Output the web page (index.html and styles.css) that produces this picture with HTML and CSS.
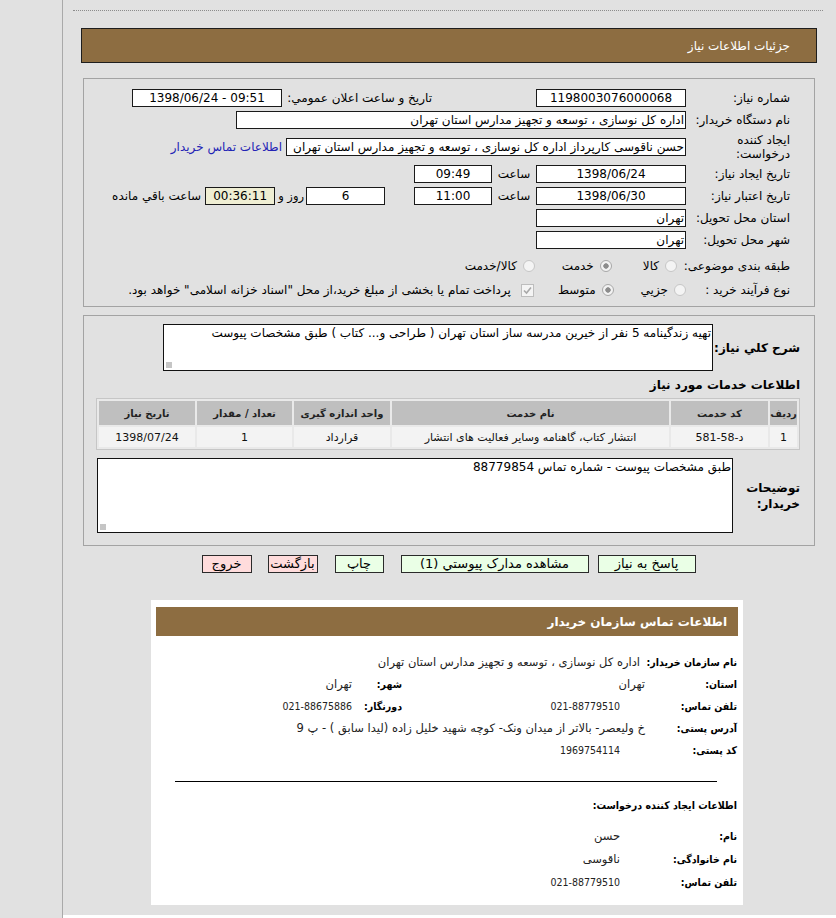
FILE: index.html
```html
<!DOCTYPE html>
<html lang="fa" dir="rtl">
<head>
<meta charset="utf-8">
<title>جزئیات اطلاعات نیاز</title>
<link rel="stylesheet" href="styles.css">
</head>
<body>
<div class="main">
  <div class="dots"></div>
  <div class="titlebar">جزئیات اطلاعات نیاز</div>

  <div class="panel form">
    <div class="frow">
      <span class="lbl">شماره نیاز:</span>
      <span class="box w150 c">1198003076000068</span>
      <span class="lbl2">تاریخ و ساعت اعلان عمومي:</span>
      <span class="box w150 c ltr">1398/06/24 - 09:51</span>
    </div>
    <div class="frow">
      <span class="lbl">نام دستگاه خریدار:</span>
      <span class="box w450">اداره کل نوسازی ، توسعه و تجهیز مدارس استان تهران</span>
    </div>
    <div class="frow tall">
      <span class="lbl wrap">ایجاد کننده درخواست:</span>
      <span class="box w400">حسن ناقوسی کارپرداز اداره کل نوسازی ، توسعه و تجهیز مدارس استان تهران</span>
      <a class="link" href="#">اطلاعات تماس خریدار</a>
    </div>
    <div class="frow">
      <span class="lbl">تاریخ ایجاد نیاز:</span>
      <span class="box w150 c">1398/06/24</span>
      <span class="hour">ساعت</span>
      <span class="box w78 c">09:49</span>
    </div>
    <div class="frow">
      <span class="lbl">تاریخ اعتبار نیاز:</span>
      <span class="box w150 c">1398/06/30</span>
      <span class="hour">ساعت</span>
      <span class="box w78 c">11:00</span>
      <span class="box w79 c days">6</span>
      <span class="and">روز و</span>
      <span class="box w70 c remain">00:36:11</span>
      <span class="left">ساعت باقي مانده</span>
    </div>
    <div class="frow">
      <span class="lbl">استان محل تحویل:</span>
      <span class="box w150">تهران</span>
    </div>
    <div class="frow">
      <span class="lbl">شهر محل تحویل:</span>
      <span class="box w150">تهران</span>
    </div>
    <div class="frow r8">
      <span class="lbl">طبقه بندی موضوعی:</span>
      <span class="opt o1"><span class="radio"></span>کالا</span>
      <span class="opt o2"><span class="radio on"></span>خدمت</span>
      <span class="opt o3"><span class="radio"></span>کالا/خدمت</span>
    </div>
    <div class="frow r9">
      <span class="lbl">نوع فرآیند خرید :</span>
      <span class="opt p1"><span class="radio"></span>جزيي</span>
      <span class="opt p2"><span class="radio on"></span>متوسط</span>
      <span class="opt p3"><span class="check"><svg width="11" height="11" viewBox="0 0 11 11"><path d="M2 5.5 L4.5 8 L9 2.5" fill="none" stroke="#a8a8a8" stroke-width="1.6"/></svg></span>پرداخت تمام یا بخشی از مبلغ خرید،از محل "اسناد خزانه اسلامی" خواهد بود.</span>
    </div>
  </div>

  <div class="panel desc">
    <div class="drow">
      <span class="blbl w87">شرح کلي نیاز:</span>
      <div class="ta ta1">تهیه زندگینامه 5 نفر از خیرین مدرسه ساز استان تهران ( طراحی و... کتاب ) طبق مشخصات پیوست</div>
    </div>
    <div class="heading">اطلاعات خدمات مورد نیاز</div>
    <table class="items">
      <colgroup>
        <col class="c1"><col class="c2"><col class="c3"><col class="c4"><col class="c5"><col class="c6">
      </colgroup>
      <tr><th>ردیف</th><th>کد خدمت</th><th>نام خدمت</th><th>واحد اندازه گیری</th><th>تعداد / مقدار</th><th>تاریخ نیاز</th></tr>
      <tr><td>1</td><td>د-58-581</td><td>انتشار کتاب، گاهنامه وسایر فعالیت های انتشار</td><td>قرارداد</td><td>1</td><td>1398/07/24</td></tr>
    </table>
    <div class="drow r2">
      <span class="blbl w67 wrap">توضیحات خریدار:</span>
      <div class="ta ta2">طبق مشخصات پیوست - شماره تماس 88779854</div>
    </div>
  </div>

  <div class="buttons">
    <span class="btn green b1">پاسخ به نیاز</span>
    <span class="btn green b2">مشاهده مدارک پیوستي (1)</span>
    <span class="btn green b3">چاپ</span>
    <span class="btn pink b4">بازگشت</span>
    <span class="btn pink b5">خروج</span>
  </div>

  <div class="contact">
    <div class="chead">اطلاعات تماس سازمان خریدار</div>
    <div class="cbody">
      <div class="crow">
        <span class="clbl">نام سازمان خریدار:</span>
        <span class="cval first">اداره کل نوسازی ، توسعه و تجهیز مدارس استان تهران</span>
      </div>
      <div class="crow">
        <span class="clbl">استان:</span>
        <span class="cval fixed">تهران</span>
        <span class="clbl2">شهر:</span>
        <span class="cval">تهران</span>
      </div>
      <div class="crow">
        <span class="clbl">تلفن تماس:</span>
        <span class="cval fixed num pad">021-88779510</span>
        <span class="clbl2">دورنگار:</span>
        <span class="cval num">021-88675886</span>
      </div>
      <div class="crow">
        <span class="clbl">آدرس پستی:</span>
        <span class="cval">خ ولیعصر- بالاتر از میدان ونک- کوچه شهید خلیل زاده (لیدا سابق ) - پ 9</span>
      </div>
      <div class="crow">
        <span class="clbl">کد پستی:</span>
        <span class="cval num pad">1969754114</span>
      </div>
      <div class="sep"></div>
      <div class="ctitle">اطلاعات ایجاد کننده درخواست:</div>
      <div class="crow2">
        <span class="clbl wide">نام:</span>
        <span class="cval">حسن</span>
      </div>
      <div class="crow2">
        <span class="clbl wide">نام خانوادگی:</span>
        <span class="cval">ناقوسی</span>
      </div>
      <div class="crow2">
        <span class="clbl wide">تلفن تماس:</span>
        <span class="cval num">021-88779510</span>
      </div>
    </div>
  </div>
  <div class="footer"></div>
</div>
</body>
</html>
```

FILE: styles.css
```css
* { box-sizing: border-box; }
html, body { margin: 0; padding: 0; }
body {
  background: #e1e1e1;
  font-family: "DejaVu Sans", sans-serif;
  font-size: 12px;
  color: #000;
  width: 836px;
  height: 918px;
  overflow: hidden;
}
.main {
  margin-left: 62px;
  border-left: 1px solid #a9a9a9;
  min-height: 918px;
  padding-top: 10px;
}
.dots {
  border-top: 1px dotted #8c8c8c;
  margin: 0 13px 0 10px;
}
.titlebar {
  margin: 17px 19px 0 18px;
  height: 35px;
  border: 1px solid #1e1e1e;
  background: #8d6d41;
  color: #fff;
  padding-right: 26px;
  display: flex;
  align-items: center;
  font-size: 12px;
}
.panel {
  border: 1px solid #a3a3a3;
  margin: 15px 21px 0 20px;
}
.form { padding: 10px 24px 9px 8px; }
.frow {
  display: flex;
  align-items: center;
  height: 18px;
  margin-bottom: 4px;
  white-space: nowrap;
}
.frow.tall { height: 28px; }
.frow.r8 { height: 26px; }
.frow.r9 { height: 14px; margin-bottom: 0; }
.lbl {
  width: 96px;
  margin-left: 8px;
  flex-shrink: 0;
  line-height: 14px;
  white-space: nowrap;
}
.lbl.wrap { white-space: normal; }
.lbl2 { width: 150px; flex-shrink: 0; margin-right: 104px; }
.box {
  height: 18px;
  border: 1px solid #1a1a1a;
  background: #fff;
  line-height: 16px;
  padding: 0 1px;
  white-space: nowrap;
  overflow: hidden;
  flex-shrink: 0;
}
.box.c { text-align: center; }
.ltr { direction: ltr; }
.w150 { width: 150px; }
.w450 { width: 450px; }
.w400 { width: 400px; }
.w78 { width: 78px; }
.w79 { width: 79px; }
.w70 { width: 70px; }
.link { color: #2323b5; text-decoration: none; margin-right: 4px; }
.hour { width: 44px; text-align: center; flex-shrink: 0; }
.days { margin-right: 29px; }
.and { margin: 0 2px 0 3px; flex-shrink: 0; font-size: 11.5px; }
.remain { background: #efeed3; }
.left { margin-right: 4px; }
.opt { display: inline-flex; align-items: center; gap: 6px; }
.o1 { margin-right: 9px; }
.o2 { margin-right: 31px; }
.o3 { margin-right: 27px; }
.p1 { margin-right: 0; }
.p2 { margin-right: 27px; }
.p3 { margin-right: 24px; gap: 10px; }
.radio {
  width: 12px;
  height: 12px;
  border-radius: 50%;
  border: 1px solid #c6c6c6;
  background: #f4f4f4;
  flex-shrink: 0;
}
.radio.on {
  border-color: #a8a8a8;
  background: radial-gradient(circle, #8c8c8c 0 2.4px, #f2f2f2 3px);
}
.check {
  width: 13px;
  height: 13px;
  border: 1px solid #bdbdbd;
  background: #f4f4f4;
  display: inline-flex;
  align-items: center;
  justify-content: center;
  flex-shrink: 0;
}
.desc { margin-top: 8px; padding: 8px 14px 12px 13px; }
.drow { display: flex; align-items: center; }
.blbl { font-weight: bold; font-size: 12px; line-height: 16px; flex-shrink: 0; white-space: nowrap; }
.blbl.wrap { white-space: normal; }
.w87 { width: 87px; }
.w67 { width: 67px; }
.ta {
  position: relative;
  border: 1px solid #111;
  background: #fff;
  padding: 0 1px;
  line-height: 16px;
  flex-shrink: 0;
}
.ta::after {
  content: "";
  position: absolute;
  left: 2px;
  bottom: 2px;
  width: 6px;
  height: 6px;
  background: radial-gradient(circle, #c4c4c4 0.7px, transparent 1px) 0 0 / 2px 2px;
}
.ta1 { width: 550px; height: 47px; }
.ta2 { width: 636px; height: 75px; }
.heading {
  font-weight: bold;
  font-size: 12px;
  line-height: 16px;
  margin-top: 6px;
  margin-bottom: 5px;
}
.items {
  width: 702px;
  margin-right: 0;
  margin-left: auto;
  border: 1px solid #c6c6c6;
  border-spacing: 2px;
  background: #e9e9e9;
  table-layout: fixed;
  font-size: 11px;
}
.c1 { width: 27px; }
.c2 { width: 97px; }
.c3 { width: 277px; }
.c4 { width: 96px; }
.c5 { width: 95px; }
.c6 { width: 96px; }
.items th {
  background: #bfbfbf;
  height: 24px;
  font-weight: bold;
  font-size: 10px;
  color: #222;
  padding: 0;
  white-space: nowrap;
}
.items td {
  background: #f3f3f3;
  height: 20px;
  text-align: center;
  padding: 0;
  color: #111;
}
.drow.r2 { margin-top: 8px; }
.buttons {
  display: flex;
  justify-content: center;
  margin-top: 9px;
  height: 18px;
}
.btn {
  height: 18px;
  border: 1px solid #2a2a2a;
  font-size: 13px;
  line-height: 16px;
  text-align: center;
  white-space: nowrap;
}
.green { background: #eaffe6; }
.pink { background: #ffdcdc; }
.b1 { width: 98px; margin-right: 2px; }
.b2 { width: 188px; margin-right: 9px; }
.b3 { width: 49px; margin-right: 17px; }
.b4 { width: 50px; margin-right: 17px; }
.b5 { width: 50px; margin-right: 16px; }
.contact {
  width: 592px;
  margin: 27px auto 0 88px;
  background: #fff;
  padding: 7px 5px 12px 5px;
  font-size: 11.5px;
}
.chead {
  height: 29px;
  background: #8d6d41;
  color: #fff;
  font-weight: bold;
  font-size: 12px;
  display: flex;
  align-items: center;
  padding-right: 11px;
}
.cbody { padding: 15px 1px 0 0; }
.crow, .crow2 {
  display: flex;
  align-items: center;
  height: 22px;
  white-space: nowrap;
}
.crow2 { height: 23px; }
.clbl {
  width: 92px;
  font-weight: bold;
  font-size: 10.5px;
  font-family: "DejaVu Sans Condensed", "DejaVu Sans", sans-serif;
  flex-shrink: 0;
}
.clbl.wide { width: 117px; }
.clbl2 {
  width: 50px;
  font-weight: bold;
  font-size: 10.5px;
  font-family: "DejaVu Sans Condensed", "DejaVu Sans", sans-serif;
  flex-shrink: 0;
}
.cval { color: #222; }
.cval.first { padding-right: 5px; }
.cval.num {
  font-family: "DejaVu Sans Condensed", "DejaVu Sans", sans-serif;
  font-size: 10.5px;
}
.cval.fixed { width: 243px; flex-shrink: 0; }
.cval.pad { padding-right: 25px; }
.sep {
  border-top: 1px solid #000;
  margin: 20px 20px 0 19px;
}
.ctitle {
  font-weight: bold;
  font-size: 10.5px;
  font-family: "DejaVu Sans Condensed", "DejaVu Sans", sans-serif;
  height: 22px;
  line-height: 22px;
  margin-top: 12px;
  margin-bottom: 8px;
}
.footer {
  margin-top: 10px;
  height: 20px;
  background: #fff;
}
```
